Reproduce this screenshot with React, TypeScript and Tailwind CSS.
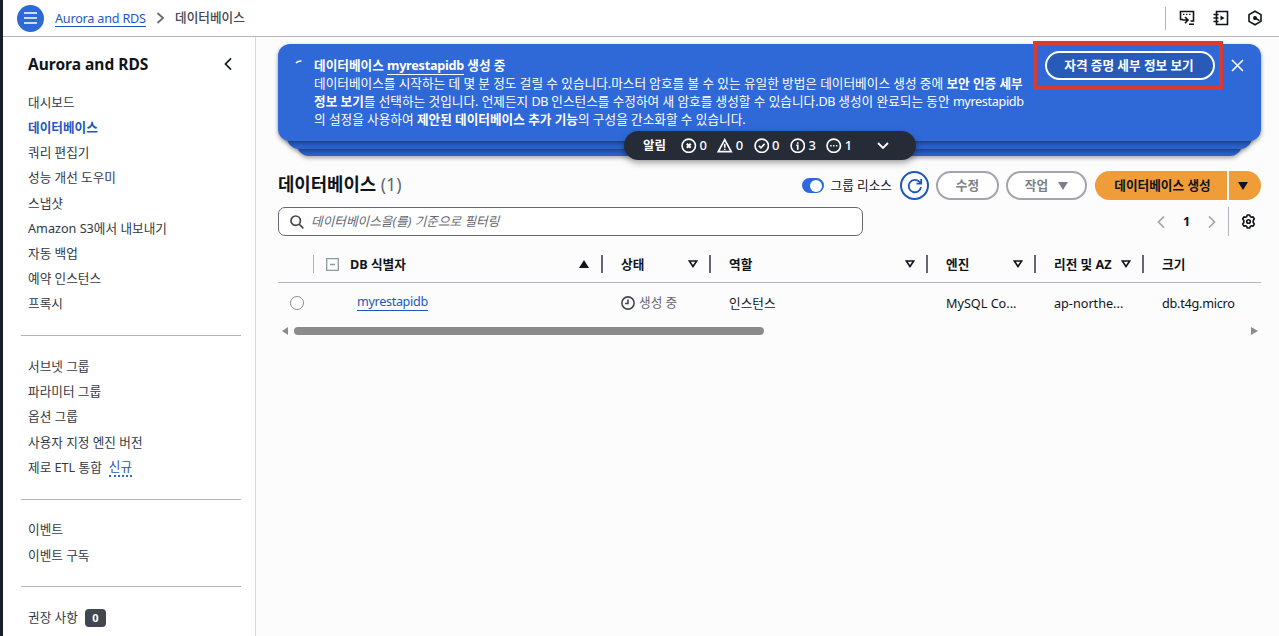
import React from "react";

const mainNav = ["대시보드", "데이터베이스", "쿼리 편집기", "성능 개선 도우미", "스냅샷", "Amazon S3에서 내보내기", "자동 백업", "예약 인스턴스", "프록시"];
const groupNav = ["서브넷 그룹", "파라미터 그룹", "옵션 그룹", "사용자 지정 엔진 버전"];
const eventNav = ["이벤트", "이벤트 구독"];

export default function App() {
  return (
    <div className="flex h-[636px] w-[1279px] overflow-hidden whitespace-nowrap bg-[#fcfcfd] font-['Noto_Sans','Noto_Sans_CJK_KR',sans-serif] text-[12.65px] leading-[18px] text-[#0f141a]">
      <div className="w-[3px] shrink-0 bg-[#161d2b]" />
      <div className="flex min-w-0 flex-1 flex-col">
        <TopBar />
        <div className="flex min-h-0 flex-1">
          <Sidebar />
          <main className="flex min-w-0 flex-1 flex-col pl-[22px] pr-[18px] pt-[7px]">
            <Flash />
            <TableTools />
            <DbTable />
          </main>
        </div>
      </div>
    </div>
  );
}

function TopBar() {
  return (
    <header className="flex h-[37px] shrink-0 items-center border-b border-[#b4b4bb] bg-white pl-[14px] pr-[16px]">
      <div className="flex h-[27px] w-[27px] items-center justify-center rounded-full bg-[#2f69d8]">
        <svg width="13" height="12" viewBox="0 0 13 12" stroke="#fff" strokeWidth="1.5">
          <path d="M0 1h13M0 6h13M0 11h13" />
        </svg>
      </div>
      <a className="ml-[11px] w-[91px] border-b border-[#1f57c0] leading-[16px] tracking-[-0.22px] text-[#1f57c0]">Aurora and RDS</a>
      <svg className="ml-[10px]" width="9" height="12" viewBox="0 0 9 12" fill="none" stroke="#656871" strokeWidth="1.7">
        <path d="M1.5 1l5.5 5-5.5 5" />
      </svg>
      <span className="ml-[10px] pb-[2px] font-medium text-[#424650]">데이터베이스</span>
      <div className="ml-auto h-[23px] w-px bg-[#b4b4bb]" />
      <svg className="ml-[13px]" width="16" height="16" viewBox="0 0 16 16" fill="none" stroke="#0f141a" strokeWidth="1.6">
        <path d="M4 9.5H1.500V1.5h13V11h-3M3.500 10h5M6 7l3 3-3 3.2M10 14.3h5" />
        <path d="M4 4.3h1.400M7 4.3h1.400M10 4.3h1.400" strokeWidth="1.3" />
      </svg>
      <svg className="ml-[18px]" width="16" height="16" viewBox="0 0 16 16" fill="none" stroke="#0f141a" strokeWidth="1.6">
        <path d="M3.500 1.500h11v13h-11zM.5 4.500h5M.5 8h5M.5 11.500h5" />
        <path d="M7.500 5.500v5l4-2.5z" fill="#0f141a" stroke="none" />
      </svg>
      <svg className="ml-[18px]" width="16" height="16" viewBox="0 0 16 16" fill="none" stroke="#0f141a" strokeWidth="1.6">
        <path d="M8 1.2l6 3.400v6.800l-6 3.400-6-3.400V4.600z" />
        <circle cx="8" cy="8" r="1.200" fill="#0f141a" />
        <path d="M8 8l4.500 2.600" />
      </svg>
    </header>
  );
}

function Sidebar() {
  return (
    <aside className="flex w-[253px] shrink-0 flex-col border-r border-[#d5d5dc] bg-white pl-[18px] pr-[14px]">
      <div className="flex h-[52.300px] shrink-0 items-center justify-between pl-[7px] pr-[9px] pt-[2px] text-[15.5px] font-bold">
        <span>Aurora and RDS</span>
        <svg width="8" height="12" viewBox="0 0 8 12" fill="none" stroke="#0f141a" strokeWidth="1.7">
          <path d="M7 .5L1.500 6 7 11.500" />
        </svg>
      </div>
      {mainNav.map(n => <NavItem key={n} label={n} active={n === "데이터베이스"} />)}
      <Divider />
      {groupNav.map(n => <NavItem key={n} label={n} />)}
      <div className="flex h-[25.2px] shrink-0 items-center pl-[7px] text-[#333843]">
        제로 ETL 통합
        <span className="ml-[7px] border-b-2 border-dotted border-[#2f69d8] text-[#1f57c0]">신규</span>
      </div>
      <Divider />
      {eventNav.map(n => <NavItem key={n} label={n} />)}
      <Divider />
      <div className="flex h-[25.2px] shrink-0 items-center pl-[7px] text-[#333843]">
        권장 사항
        <span className="ml-[7px] mt-[2px] w-[21px] rounded-[4px] bg-[#424650] text-center text-[11px] font-bold text-white">0</span>
      </div>
    </aside>
  );
}

function NavItem({ label, active }: { label: string; active?: boolean }) {
  return (
    <div className={`flex h-[25.2px] shrink-0 items-center pl-[7px] ${active ? "font-bold text-[#1f57c0]" : "text-[#333843]"}`}>
      {label}
    </div>
  );
}

function Divider() {
  return <div className="mb-[17.400px] mt-[19.100px] h-px shrink-0 bg-[#b4b4bb]" />;
}

function Flash() {
  return (
    <div className="relative flex h-[112px] shrink-0 flex-col text-white">
      <div className="absolute inset-x-[19px] bottom-0 h-[30px] rounded-xl bg-[#2a61cb] shadow-[0_2px_4px_rgba(0,0,0,0.35)]" />
      <div className="absolute inset-x-[9px] bottom-[7px] h-[30px] rounded-xl bg-[#2a61cb] shadow-[0_2px_4px_rgba(0,0,0,0.35)]" />
      <section className="relative flex h-[97px] rounded-xl bg-[#2f69d8] pl-[36px] pt-[12px] shadow-[0_2px_4px_rgba(0,0,0,0.4)]">
        <svg className="absolute left-[17px] top-[15px]" width="8" height="6" viewBox="0 0 8 6" fill="none" stroke="#fff" strokeWidth="1.7">
          <path d="M1 4Q3 1.800 6.500 2" />
        </svg>
        <div>
          <p className="font-bold">데이터베이스 <a className="border-b border-white tracking-[-0.25px]">myrestapidb</a> 생성 중</p>
          <p>데이터베이스를 시작하는 데 몇 분 정도 걸릴 수 있습니다.마스터 암호를 볼 수 있는 유일한 방법은 데이터베이스 생성 중에 <b>보안 인증 세부</b></p>
          <p><b>정보 보기</b>를 선택하는 것입니다. 언제든지 <span className="tracking-[-0.5px]">DB</span> 인스턴스를 수정하여 새 암호를 생성할 수 있습니다.<span className="tracking-[-0.5px]">DB</span> 생성이 완료되는 동안 <span className="tracking-[-0.35px]">myrestapidb</span></p>
          <p>의 설정을 사용하여 <b>제안된 데이터베이스 추가 기능</b>의 구성을 간소화할 수 있습니다.</p>
        </div>
        <div className="absolute right-[46px] top-[7px] flex h-[29px] w-[170px] items-center justify-center rounded-full border-2 border-white bg-[#285bb9] pb-[2px] pr-[2px] font-bold">자격 증명 세부 정보 보기</div>
        <div className="absolute right-[38px] top-[-3px] h-[49px] w-[190px] border-4 border-[#d93a34]" />
        <svg className="absolute right-[17px] top-[15px]" width="13" height="13" viewBox="0 0 13 13" stroke="#fff" strokeWidth="1.600">
          <path d="M1 1l11 11M12 1L1 12" />
        </svg>
      </section>
      <div className="absolute left-[346px] top-[87px] flex h-[29px] w-[292px] items-center rounded-full bg-[#262c37] pl-[19px] text-[13px] font-medium shadow-[0_3px_7px_rgba(0,0,0,0.35)]">
        <b className="w-[38px] text-[12.5px]">알림</b>
        <Count n={0}><circle cx="8" cy="8" r="6.900" /><path d="M6 6l4 4M10 6l-4 4" strokeWidth="2.2" /></Count>
        <Count n={0}><path d="M8 1.700L14.700 14H1.300zM8 6v4M8 11v1.500" /></Count>
        <Count n={0}><circle cx="8" cy="8" r="6.900" /><path d="M5 8l2.200 2.200L11 6" /></Count>
        <Count n={3}><circle cx="8" cy="8" r="6.900" /><path d="M8 4.300v1.600M6.500 7.500H8V12" /></Count>
        <Count n={1}><circle cx="8" cy="8" r="6.900" /><path d="M4.300 8h1.500M7.250 8h1.500M10.200 8h1.500" /></Count>
        <svg className="ml-[15px]" width="12" height="8" viewBox="0 0 12 8" fill="none" stroke="#fff" strokeWidth="1.800">
          <path d="M1 1l5 5 5-5" />
        </svg>
      </div>
    </div>
  );
}

function Count({ n, children }: { n: number; children: React.ReactNode }) {
  return (
    <div className="flex w-[36.300px] items-center gap-[3px]">
      <svg width="15.500" height="15.500" viewBox="0 0 16 16" fill="none" stroke="#fff" strokeWidth="1.700">{children}</svg>
      <span className="pb-px">{n}</span>
    </div>
  );
}

function TableTools() {
  return (
    <>
      <div className="mt-[15px] flex h-[29px] shrink-0 items-center">
        <h1 className="pb-[3px] text-[17.8px] font-bold">데이터베이스 <span className="font-normal text-[#656871]">(1)</span></h1>
        <div className="ml-auto flex h-[15px] w-[22px] items-center justify-end rounded-full bg-[#2f69d8] pr-[1.500px]">
          <div className="h-[12px] w-[12px] rounded-full bg-white" />
        </div>
        <span className="ml-[7px] pb-[2px]">그룹 리소스</span>
        <div className="ml-[8px] flex h-[29px] w-[29px] items-center justify-center rounded-full border-2 border-[#1f57c0] bg-white">
          <svg width="16" height="16" viewBox="0 0 16 16" fill="none" stroke="#1f57c0" strokeWidth="1.800">
            <path d="M14 9a6.200 6.200 0 1 1-1.700-5.300L14 5.500M14.200 1v4.700H9.500" />
          </svg>
        </div>
        <div className="ml-[7px] flex h-[29px] w-[63px] items-center justify-center rounded-full border-2 border-[#a4a4ad] bg-white pb-[2px] font-bold text-[#7d7f88]">수정</div>
        <div className="ml-[7px] flex h-[29px] w-[81px] items-center justify-center gap-[10px] rounded-full border-2 border-[#a4a4ad] bg-white font-bold text-[#7d7f88]">
          <span className="pb-[2px]">작업</span> <Caret />
        </div>
        <div className="ml-[8px] flex h-[29px] w-[132px] items-center justify-center rounded-l-full bg-[#f09d39] pb-[2px] pl-[3px] font-bold">데이터베이스 생성</div>
        <div className="ml-[2px] flex h-[29px] w-[32px] items-center rounded-r-full bg-[#f09d39] pl-[9px]"><Caret /></div>
      </div>
      <div className="mt-[7px] flex h-[29px] shrink-0 items-center">
        <div className="flex h-[29px] w-[585px] items-center rounded-[7px] border border-[#656871] bg-white pl-[11px] italic text-[#656871]">
          <svg className="mr-[7px]" width="14" height="14" viewBox="0 0 14 14" fill="none" stroke="#424650" strokeWidth="1.700">
            <circle cx="5.700" cy="5.700" r="4.700" />
            <path d="M9 9l4.300 4.300" />
          </svg>
          <span className="pb-[2px]">데이터베이스을(를) 기준으로 필터링</span>
        </div>
        <svg className="ml-auto" width="8" height="12" viewBox="0 0 8 12" fill="none" stroke="#a4a4ad" strokeWidth="1.700"><path d="M7 .5L1.500 6 7 11.500" /></svg>
        <b className="ml-[18px] w-[8px] pb-[2px]">1</b>
        <svg className="ml-[17px]" width="8" height="12" viewBox="0 0 8 12" fill="none" stroke="#a4a4ad" strokeWidth="1.700"><path d="M1 .5L6.500 6 1 11.500" /></svg>
        <div className="ml-[12px] h-[29px] w-px bg-[#b4b4bb]" />
        <svg className="ml-[12px] mr-[5px]" width="15" height="15" viewBox="0 0 15 15" fill="none" stroke="#0f141a" strokeWidth="1.600" strokeLinejoin="round">
          <path d="M5.700 2.600L6.300 1h2.400l.6 1.600 1.100.6 1.700-.3 1.200 2.100L12.200 6.500v2l1.100 1.500-1.200 2.100-1.700-.3-1.100.6L8.700 14H6.300l-.6-1.600-1.100-.6-1.700.3L1.700 10l1.100-1.500v-2L1.700 5l1.200-2.100 1.700.3z" />
          <circle cx="7.500" cy="7.500" r="1.800" />
        </svg>
      </div>
    </>
  );
}

function Caret() {
  return <svg width="10" height="8" viewBox="0 0 10 8" fill="currentColor"><path d="M0 0h10L5 8z" /></svg>;
}

function SortIcon() {
  return (
    <svg width="10" height="8" viewBox="0 0 10 8" fill="none" stroke="#0f141a" strokeWidth="1.600">
      <path d="M1.300 1h7.400L5 6.500z" />
    </svg>
  );
}

function HeadCell({ label, cls }: { label: string; cls: string }) {
  return (
    <div className={`flex h-[18px] items-center justify-between border-r-2 border-[#656871] pr-[11px] ${cls}`}>
      <span>{label}</span>
      <SortIcon />
    </div>
  );
}

function DbTable() {
  return (
    <div className="mt-[10px]">
      <div className="flex h-[37px] items-center border-b border-[#b4b4bb] font-bold">
        <div className="ml-[35px] h-[18px] w-px bg-[#b4b4bb]" />
        <svg className="ml-[12px]" width="13" height="13" viewBox="0 0 13 13" fill="none" stroke="#8c9b9b" strokeWidth="1.300">
          <path d="M.7.7h11.600v11.600H.7zM4 6.500h5" />
        </svg>
        <div className="ml-[11px] flex h-[18px] w-[253px] items-center justify-between border-r-2 border-[#656871] pr-[12px]">
          <span className="pb-px">DB 식별자</span>
          <svg width="10" height="8" viewBox="0 0 10 8" fill="#0f141a"><path d="M0 8h10L5 0z" /></svg>
        </div>
        <HeadCell label="상태" cls="ml-[18px] w-[90px]" />
        <HeadCell label="역할" cls="ml-[18px] w-[199px]" />
        <HeadCell label="엔진" cls="ml-[18px] w-[90px]" />
        <HeadCell label="리전 및 AZ" cls="ml-[18px] w-[90px]" />
        <span className="ml-[18px]">크기</span>
      </div>
      <div className="flex h-[40px] items-center">
        <div className="ml-[12px] h-[14px] w-[14px] rounded-full border border-[#8c8c94] bg-white" />
        <div className="ml-[53px] w-[264px] pb-[4px]">
          <a className="border-b border-[#1f57c0] tracking-[-0.35px] text-[#1f57c0]">myrestapidb</a>
        </div>
        <div className="flex w-[108px] items-center gap-[4px] text-[#656871]">
          <svg width="14" height="14" viewBox="0 0 14 14" fill="none" stroke="#424650" strokeWidth="1.600">
            <circle cx="7" cy="7" r="6.100" />
            <path d="M7 3.500V7.500H4" />
          </svg>
          <span className="pb-[2px]">생성 중</span>
        </div>
        <div className="w-[217px]">인스턴스</div>
        <div className="w-[108px]">MySQL Co...</div>
        <div className="w-[108px]">ap-northe...</div>
        <div className="tracking-[-0.25px]">db.t4g.micro</div>
      </div>
      <div className="mt-[4px] flex h-[8px] items-center">
        <svg className="ml-[4px]" width="6" height="8" viewBox="0 0 6 8" fill="#8b8b8b"><path d="M6 0v8L0 4z" /></svg>
        <div className="ml-[6px] h-[8px] w-[470px] rounded-full bg-[#8b8b8b]" />
        <svg className="ml-auto mr-[3px]" width="7" height="8" viewBox="0 0 7 8" fill="#8b8b8b"><path d="M0 0v8l7-4z" /></svg>
      </div>
    </div>
  );
}
